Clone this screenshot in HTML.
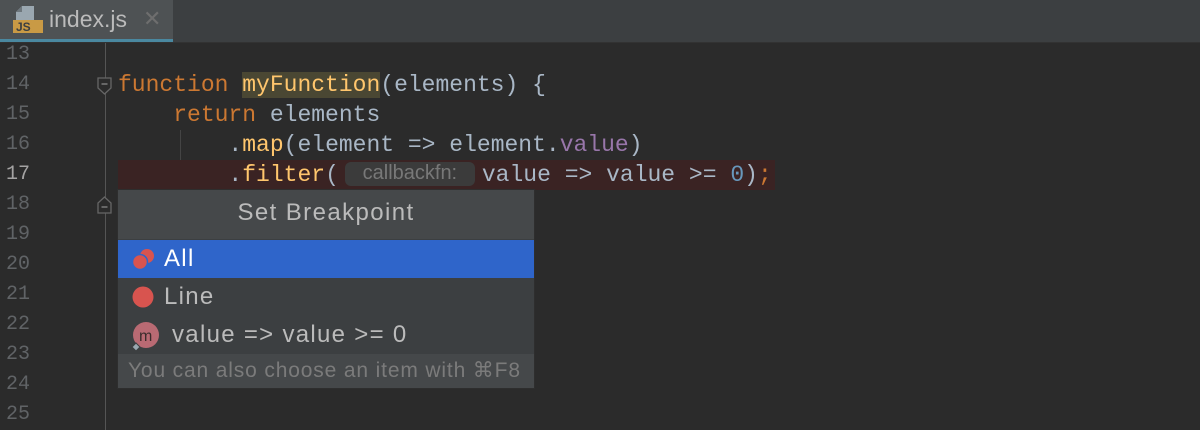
<!DOCTYPE html>
<html><head><meta charset="utf-8"><style>
body{margin:0;width:1200px;height:430px;background:#2b2b2b;overflow:hidden;position:relative;font-family:"Liberation Mono",monospace}
.tabbar{position:absolute;left:0;top:0;width:1200px;height:42px;background:#3c3f41;border-bottom:1px solid #323232}
.tab{position:absolute;left:0;top:0;width:173px;height:39px;background:#4e5254;border-bottom:3px solid #4a88a0}
.tab .name{position:absolute;left:49px;top:6px;font:23px "Liberation Sans",sans-serif;color:#bbbbbb}
.tab .x{position:absolute;left:143px;top:6px;font:22px "Liberation Sans",sans-serif;color:#6e6e6e}
.ln{position:absolute;left:6px;width:40px;color:#606366;font-size:20px;line-height:30px}
.code{position:absolute;left:118px;font-size:23px;line-height:30px;color:#a9b7c6;white-space:pre}
.k{color:#cc7832}.f{color:#ffc66d}.p{color:#9876aa}.n{color:#6897bb}
.hint{display:inline-block;width:130px;height:24px;line-height:24px;vertical-align:2px;background:#3b3b3b;border-radius:6px;color:#787878;font:20px "Liberation Sans",sans-serif;text-align:center;margin:0 7px 0 6px}
.popup{position:absolute;left:117px;top:189px;width:416px;height:198px;background:#3c3f41;border:1px solid #2e2e2e;font-family:"Liberation Sans",sans-serif}
.row{position:absolute;left:0;width:416px;height:38px;line-height:38px;font-size:24px;letter-spacing:1.3px;color:#bbbbbb}
</style></head><body>
<div class="tabbar"><div class="tab">
<svg style="position:absolute;left:12px;top:4px" width="32" height="32"><path d="M10 2h12v14H4V8z" fill="#9aa7b0"/><path d="M10 2v6H4" fill="#6e777d"/><rect x="1" y="16" width="30" height="13" fill="#c99a45"/><text x="4" y="27" font-family="Liberation Sans" font-size="12" font-weight="bold" fill="#3c3f41">JS</text></svg>
<span class="name">index.js</span><span class="x">✕</span></div></div>
<div style="position:absolute;left:105px;top:43px;width:1px;height:387px;background:#555"></div>
<div style="position:absolute;left:180px;top:130px;width:1px;height:60px;background:#444"></div>
<div style="position:absolute;left:118px;top:160px;width:657px;height:30px;background:#3a2323"></div>
<div class="ln" style="top:40px">13</div><div class="ln" style="top:70px">14</div><div class="ln" style="top:100px">15</div><div class="ln" style="top:130px">16</div><div class="ln" style="top:160px;color:#a4a3a3">17</div><div class="ln" style="top:190px">18</div><div class="ln" style="top:220px">19</div><div class="ln" style="top:250px">20</div><div class="ln" style="top:280px">21</div><div class="ln" style="top:310px">22</div><div class="ln" style="top:340px">23</div><div class="ln" style="top:370px">24</div><div class="ln" style="top:400px">25</div>
<svg style="position:absolute;left:97px;top:77px" width="16" height="20"><path d="M1 1h13v10l-6.5 6L1 11z" fill="#2b2b2b" stroke="#666" stroke-width="1.3"/><path d="M4.5 7h6" stroke="#888" stroke-width="1.3"/></svg>
<svg style="position:absolute;left:97px;top:195px" width="16" height="20"><path d="M1 18h13V8L7.5 2 1 8z" fill="#2b2b2b" stroke="#666" stroke-width="1.3"/><path d="M4.5 12h6" stroke="#888" stroke-width="1.3"/></svg>
<div class="code" style="top:70px"><span class="k">function</span> <span class="f" style="background:#4a4733">myFunction</span>(elements) {</div>
<div class="code" style="top:100px">    <span class="k">return</span> elements</div>
<div class="code" style="top:130px">        .<span class="f">map</span>(element =&gt; element.<span class="p">value</span>)</div>
<div class="code" style="top:160px">        .<span class="f">filter</span>(<span class="hint">callbackfn:</span>value =&gt; value &gt;= <span class="n">0</span>)<span class="k">;</span></div>
<div class="popup">
<div style="position:absolute;left:0;top:0;width:416px;height:49px;background:#45484a;line-height:46px;text-align:center;font-size:24px;letter-spacing:1.4px;color:#bbbbbb">Set Breakpoint</div>
<div class="row" style="top:50px;background:#2f65ca;color:#fff"><svg style="position:absolute;left:13px;top:8px" width="26" height="24"><circle cx="16" cy="8" r="7" fill="#d8544f"/><circle cx="9" cy="14" r="7.5" fill="#d8544f" stroke="#2f65ca" stroke-width="1.5"/></svg><span style="position:absolute;left:46px">All</span></div>
<div class="row" style="top:88px"><svg style="position:absolute;left:14px;top:8px" width="24" height="24"><circle cx="11" cy="11" r="10.5" fill="#d8544f"/></svg><span style="position:absolute;left:46px">Line</span></div>
<div class="row" style="top:126px"><svg style="position:absolute;left:12px;top:5px" width="34" height="30"><circle cx="16" cy="14" r="13" fill="#b96a73"/><text x="9" y="20" font-family="Liberation Sans" font-size="16" fill="#3c2c2c">m</text><path d="M6 22l4 4-4 4-4-4z" fill="#9aa7b0" stroke="#3c3f41"/></svg><span style="position:absolute;left:54px">value =&gt; value &gt;= 0</span></div>
<div style="position:absolute;left:0;top:164px;width:416px;height:34px;background:#45484a;line-height:34px;font-size:21px;letter-spacing:0.85px;color:#7b7b7b;padding-left:10px;box-sizing:border-box;white-space:nowrap">You can also choose an item with ⌘F8</div>
</div>
</body></html>
